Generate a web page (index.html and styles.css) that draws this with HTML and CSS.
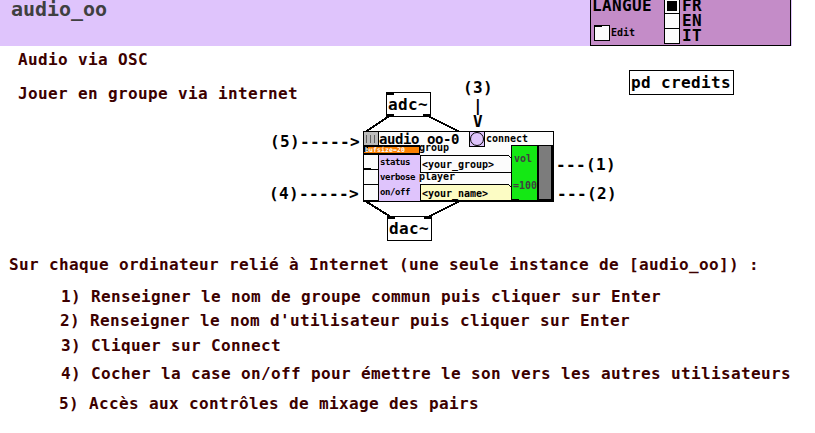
FILE: index.html
```html
<!DOCTYPE html>
<html lang="fr">
<head>
<meta charset="utf-8">
<title>audio_oo</title>
<link rel="stylesheet" href="styles.css">
</head>
<body>
<header class="banner">
  <h1 class="title">audio_oo</h1>
  <section class="lang">
    <div class="lang-main">
      <span class="text">LANGUE</span>
      <label class="edit"><i class="toggle"></i><span class="small">Edit</span></label>
    </div>
    <div class="radio"><i class="on"></i><i></i><i></i></div>
    <div class="choices"><span>FR</span><span>EN</span><span>IT</span></div>
  </section>
</header>
<main>
  <div class="intro">
    <p>Audio via OSC</p>
    <p>Jouer en groupe via internet</p>
  </div>
  <div class="patch">
    <svg class="wires" width="815" height="433" viewBox="0 0 815 433">
      <g stroke="#000" stroke-width="2" fill="none" shape-rendering="crispEdges">
        <path d="M390 115.500L366 131.500M427 115.500L459 131.500M366 201.500L391 217M459 201.500L428 217"/>
      </g>
    </svg>
    <div class="object adc"><span>adc~</span></div>
    <div class="object dac"><span>dac~</span></div>
    <div class="object credits"><span>pd credits</span></div>
    <span class="note n5">(5)-----&gt;</span>
    <span class="note n4">(4)-----&gt;</span>
    <span class="note n3">(3)</span>
    <span class="note bar">|</span>
    <span class="note vee">V</span>
    <span class="note n1">---(1)</span>
    <span class="note n2">---(2)</span>
    <section class="module">
      <svg class="shapes" width="191" height="71" viewBox="0 0 191 71" shape-rendering="crispEdges">
        <path fill="#000" d="M0 0h191v71H0z"/>
        <path fill="#fcfcfc" d="M16 1h174v13H16zM57 14h91v56H57z"/>
        <path fill="#bcbcbc" d="M1 1h14v13H1z"/>
        <path fill="#606060" d="M3 4h1v8H3zM7 4h1v8H7zM11 4h1v8h-1z"/>
        <path fill="#fc8000" d="M1 16h55v6H1z"/>
        <path fill="#000" d="M1 16h4v5H1z"/>
        <path fill="#dfc4fc" d="M16 24h41v46H16z"/>
        <path fill="#fcfcfc" d="M1 24h14v14H1zM1 39h14v14H1zM1 54h14v15H1z"/>
        <path fill="#000" d="M1 37h7v2H1z"/>
        <path fill="#fcfcc4" d="M58 54h90v15H58z"/>
        <path fill="#000" d="M57 24h89v1H57zM57 24h1v17h-1zM57 41h91v1H57zM57 53h89v1H57zM57 53h1v17h-1zM57 69h91v1H57zM146 25h1v1h-1zM147 26h1v1h-1zM146 54h1v1h-1zM147 55h1v1h-1z"/>
        <path fill="#14e814" d="M149 15h25v54h-25z"/>
        <path fill="#7c7c7c" d="M176 15h12v53h-12z"/>
        <path fill="#000" d="M148 68h8v2h-8zM106 0h16v16h-16z"/>
        <path fill="#dfc4fc" d="M107 1h14v14h-14z"/>
        <circle cx="114" cy="8" r="6.500" fill="#dfc4fc" stroke="#000" shape-rendering="auto"/>
      </svg>
      <span class="name">audio_oo-0</span>
      <span class="tiny">bufsize=20</span>
      <div class="flags"><span>status</span><span>verbose</span><span>on/off</span></div>
      <span class="small connect">connect</span>
      <span class="small group">group</span>
      <span class="small group-value">&lt;your_group&gt;</span>
      <span class="small player">player</span>
      <span class="small player-value">&lt;your_name&gt;</span>
      <span class="small vol">vol</span>
      <span class="small level">=100</span>
    </section>
  </div>
  <section class="guide">
    <p class="lead">Sur chaque ordinateur relié à Internet (une seule instance de [audio_oo]) :</p>
    <p class="s1">1) Renseigner le nom de groupe commun puis cliquer sur Enter</p>
    <p class="s2">2) Renseigner le nom d'utilisateur puis cliquer sur Enter</p>
    <p class="s3">3) Cliquer sur Connect</p>
    <p class="s4">4) Cocher la case on/off pour émettre le son vers les autres utilisateurs</p>
    <p class="s5">5) Accès aux contrôles de mixage des pairs</p>
  </section>
</main>
</body>
</html>
```
FILE: styles.css
```css
* { box-sizing: border-box; }
body {
  margin: 0;
  width: 815px;
  height: 433px;
  overflow: hidden;
  position: relative;
  background: #fff;
  color: #000;
  font: bold 16px/20px "DejaVu Sans Mono", monospace;
  letter-spacing: calc(10px - 0.602em);
}
p, h1 { margin: 0; }
.banner {
  display: flex;
  justify-content: space-between;
  width: 792px;
  height: 46px;
  padding-right: 1px;
  background: #dfc4fc;
}
.title {
  padding-left: 11px;
  margin-top: -3px;
  font-size: 20px;
  line-height: 24px;
  letter-spacing: calc(12px - 0.602em);
  color: #404040;
}
.lang {
  display: flex;
  width: 201px;
  height: 46px;
  border: 1px solid #000;
  border-top: 0;
  background: #c48cc8;
}
.lang-main { width: 73px; padding-left: 1px; }
.lang-main .text { display: block; margin-top: -4px; height: 29px; }
.edit { display: flex; padding-left: 2px; gap: 1px; }
.toggle {
  width: 16px;
  height: 16px;
  border: 1px solid #000;
  background: linear-gradient(#000, #000) 0 0 / 7px 1px no-repeat #fcfcfc;
}
.small {
  font-size: 10px;
  line-height: 12px;
  letter-spacing: calc(6px - 0.602em);
}
.edit .small { margin-top: 2px; }
.radio { width: 16px; margin-top: -2px; }
.radio i {
  display: block;
  width: 16px;
  height: 16px;
  margin-bottom: -1px;
  border: 1px solid #000;
  background: #fcfcfc;
}
.radio .on { box-shadow: inset 0 0 0 2px #fcfcfc; background: #000; }
.choices { display: grid; grid-template-rows: repeat(3, 15px); margin: -4px 0 0 2px; height: 45px; }

.intro { padding: 4px 0 0 18px; color: #3c0000; }
.intro p + p { margin-top: 14px; }

.patch { position: absolute; inset: 0; }
.patch > *, .module > * { position: absolute; }
.wires { left: 0; top: 0; }
.object {
  height: 25px;
  padding: 2px 0 0 1px;
  border: 1px solid #000;
  background: #fff;
  white-space: nowrap;
}
.adc, .dac { width: 45px; }
.adc::before, .adc::after, .dac::before, .dac::after, .adc span::before {
  content: "";
  position: absolute;
  width: 7px;
  height: 2px;
  background: #000;
}
.adc { left: 386px; top: 92px; }
.adc::before { left: 0; bottom: 0; }
.adc::after { right: 0; bottom: 0; }
.adc span::before { left: 0; top: 0; }
.dac { left: 387px; top: 216px; }
.dac::before { left: 0; top: 0; }
.dac::after { right: 0; top: 0; }
.credits { left: 629px; top: 70px; width: 105px; }
.note { white-space: nowrap; }
.n5 { left: 270px; top: 132px; }
.n4 { left: 269px; top: 184px; }
.n3 { left: 463px; top: 78px; }
.bar { left: 473px; top: 96px; }
.vee { left: 473px; top: 112px; }
.n1 { left: 556px; top: 155px; }
.n2 { left: 557px; top: 184px; }

.module { left: 363px; top: 131px; width: 191px; height: 71px; white-space: nowrap; }
.shapes { left: 0; top: 0; }
.name {
  left: 16px;
  top: 0;
  height: 14px;
  overflow: hidden;
  font-size: 14px;
  line-height: 16px;
  letter-spacing: calc(8px - 0.602em);
}
.tiny {
  left: 2px;
  top: 15px;
  font-size: 6.5px;
  line-height: 8px;
  letter-spacing: calc(4px - 0.602em);
  color: #fcfcfc;
}
.flags {
  left: 17px;
  top: 25px;
  display: grid;
  grid-template-rows: repeat(3, 15px);
  font-size: 9px;
  line-height: 13px;
  letter-spacing: calc(5px - 0.602em);
}
.connect { left: 123px; top: 2px; }
.group { left: 56px; top: 11px; }
.group-value { left: 59px; top: 28px; }
.player { left: 56px; top: 40px; }
.player-value { left: 59px; top: 57px; }
.vol { left: 151px; top: 22px; color: #404040; }
.level { left: 150px; top: 49px; color: #404040; }

.guide { padding: 151px 0 0 9px; color: #3c0000; white-space: nowrap; }
.s1 { margin: 12px 0 0 52px; }
.s2 { margin: 4px 0 0 51px; }
.s3 { margin: 5px 0 0 52px; }
.s4 { margin: 8px 0 0 52px; }
.s5 { margin: 10px 0 0 50px; }
```
